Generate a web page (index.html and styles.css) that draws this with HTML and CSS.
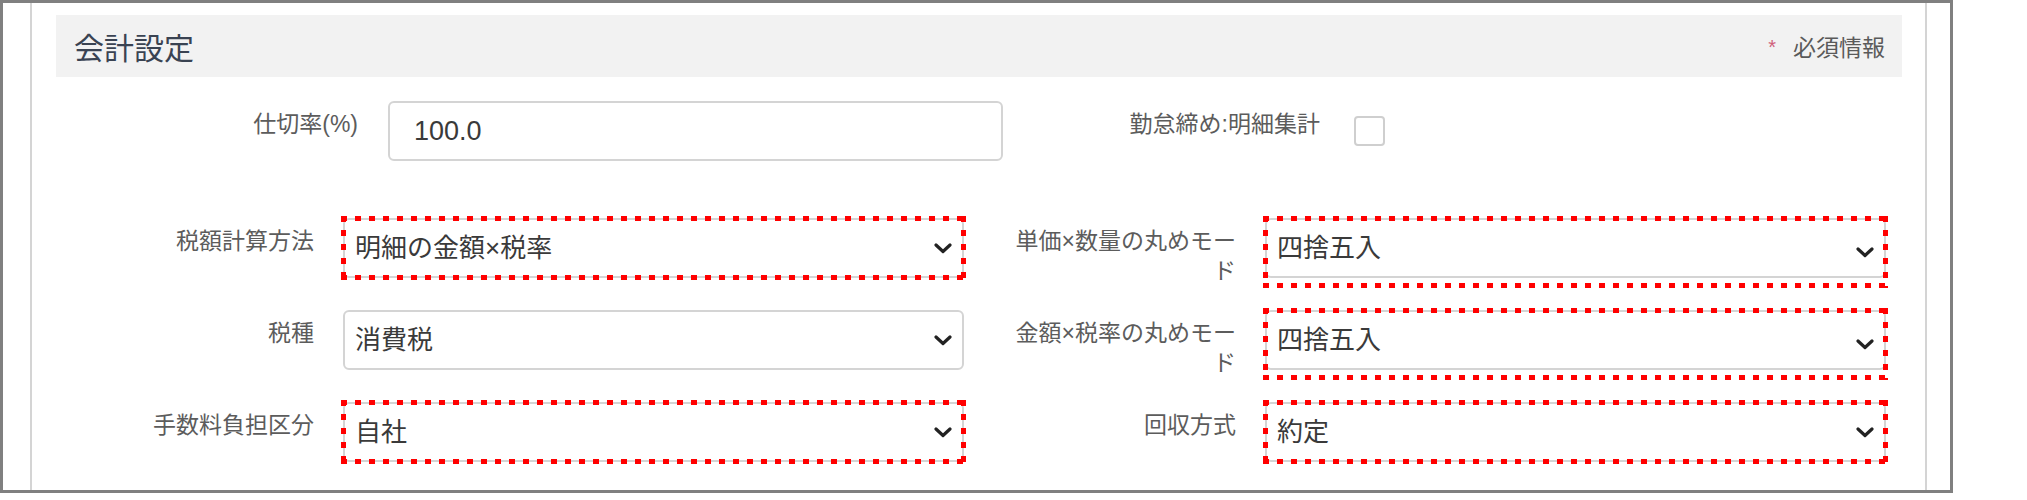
FILE: index.html
```html
<!DOCTYPE html>
<html lang="ja">
<head>
    <meta charset="UTF-8">
    <meta name="viewport" content="width=device-width, initial-scale=1.0">
    <title>会計設定</title>
    <link rel="stylesheet" href="styles.css">
</head>
<body>
    <div class="frame">
        <div class="panel">
            <div class="section-head">
                <h2 class="section-title">会計設定</h2>
                <span class="required-note"><span class="req-mark">*</span>必須情報</span>
            </div>

            <div class="row-first">
                <div class="field-first">
                    <label class="field-label label-rate" for="shikiriRitsu">仕切率(%)</label>
                    <input type="text" id="shikiriRitsu" class="text-input" value="100.0">
                </div>
                <div class="field-check">
                    <label class="field-label" for="kintaiShukei">勤怠締め:明細集計</label>
                    <input type="checkbox" id="kintaiShukei" class="check">
                </div>
            </div>

            <div class="form-grid">
                <div class="field">
                    <label class="field-label">税額計算方法</label>
                    <div class="select-wrap annot">
                        <select class="select"><option>明細の金額×税率</option></select>
                        <svg class="chevron" viewBox="0 0 18 11"><path d="M2 2 L9 8.5 L16 2"/></svg>
                    </div>
                </div>
                <div class="field">
                    <label class="field-label">単価×数量の丸めモード</label>
                    <div class="select-wrap annot">
                        <select class="select"><option>四捨五入</option></select>
                        <svg class="chevron" viewBox="0 0 18 11"><path d="M2 2 L9 8.5 L16 2"/></svg>
                    </div>
                </div>
                <div class="field">
                    <label class="field-label">税種</label>
                    <div class="select-wrap">
                        <select class="select"><option>消費税</option></select>
                        <svg class="chevron" viewBox="0 0 18 11"><path d="M2 2 L9 8.5 L16 2"/></svg>
                    </div>
                </div>
                <div class="field">
                    <label class="field-label">金額×税率の丸めモード</label>
                    <div class="select-wrap annot">
                        <select class="select"><option>四捨五入</option></select>
                        <svg class="chevron" viewBox="0 0 18 11"><path d="M2 2 L9 8.5 L16 2"/></svg>
                    </div>
                </div>
                <div class="field">
                    <label class="field-label">手数料負担区分</label>
                    <div class="select-wrap annot">
                        <select class="select"><option>自社</option></select>
                        <svg class="chevron" viewBox="0 0 18 11"><path d="M2 2 L9 8.5 L16 2"/></svg>
                    </div>
                </div>
                <div class="field">
                    <label class="field-label">回収方式</label>
                    <div class="select-wrap annot">
                        <select class="select"><option>約定</option></select>
                        <svg class="chevron" viewBox="0 0 18 11"><path d="M2 2 L9 8.5 L16 2"/></svg>
                    </div>
                </div>
            </div>
        </div>
    </div>
</body>
</html>
```

FILE: styles.css
```css
body {
    margin: 0;
    background-color: #fff;
    font-family: "Liberation Sans", "Noto Sans CJK JP", sans-serif;
    color: #333;
}

.frame {
    width: 1953px;
    height: 493px;
    box-sizing: border-box;
    border: 3px solid #808080;
    background-color: #fff;
}

.panel {
    height: 100%;
    margin: 0 23px 0 27px;
    padding: 12px 23px 0 24px;
    border-left: 2px solid #d4d4d4;
    border-right: 2px solid #d4d4d4;
    box-sizing: border-box;
}

.section-head {
    height: 62px;
    background-color: #f2f2f2;
    display: flex;
    align-items: center;
    justify-content: space-between;
    padding: 0 17px 0 18px;
}

.section-title {
    margin: 0;
    font-size: 30px;
    font-weight: normal;
    color: #3a4352;
}

.required-note {
    font-size: 23px;
    color: #5a5a5a;
    display: flex;
    align-items: center;
}

.req-mark {
    color: #d0607a;
    font-size: 20px;
    margin-right: 17px;
    margin-top: 2px;
}

.field-label {
    font-size: 23px;
    line-height: 30px;
    color: #5c5c5c;
    text-align: right;
    padding-top: 8px;
}

/* 1行目 */
.row-first {
    display: grid;
    grid-template-columns: 922px 922px;
    margin-top: 24px;
    height: 60px;
}

.field-first {
    display: grid;
    grid-template-columns: 302px 615px;
    column-gap: 30px;
}

.field-check {
    display: grid;
    grid-template-columns: 342px 32px;
    column-gap: 34px;
}

.text-input {
    height: 60px;
    box-sizing: border-box;
    border: 2px solid #d4d4d4;
    border-radius: 6px;
    padding: 0 24px;
    font-family: inherit;
    font-size: 27px;
    color: #3a3a3a;
    outline: none;
}

.check {
    appearance: none;
    margin: 15px 0 0;
    width: 31px;
    height: 30px;
    border: 2px solid #cfcfcf;
    border-radius: 4px;
    background-color: #fff;
}

/* 2〜4行目 */
.form-grid {
    display: grid;
    grid-template-columns: 922px 922px;
    row-gap: 32px;
    margin-top: 57px;
}

.field {
    display: grid;
    grid-template-columns: 258px 621px;
    column-gap: 29px;
    height: 60px;
}

.field .field-label {
    padding-left: 26px;
}

.select-wrap {
    position: relative;
}

.select {
    appearance: none;
    width: 100%;
    height: 60px;
    box-sizing: border-box;
    border: 2px solid #d4d4d4;
    border-radius: 6px;
    background-color: #fff;
    padding: 0 44px 0 10px;
    font-family: inherit;
    font-size: 26px;
    color: #3a3a3a;
    outline: none;
}

.chevron {
    position: absolute;
    right: 12px;
    top: 50%;
    width: 18px;
    height: 11px;
    margin-top: -5px;
    fill: none;
    stroke: #222;
    stroke-width: 3.2;
    stroke-linecap: round;
    stroke-linejoin: round;
}

/* 赤い点線の注記枠 */
.annot::after {
    content: "";
    position: absolute;
    top: -2px;
    left: -2px;
    right: -2px;
    bottom: -2px;
    pointer-events: none;
    background:
        repeating-linear-gradient(90deg, #f00 0 6px, transparent 6px 14px) left top / 100% 5px no-repeat,
        repeating-linear-gradient(90deg, #f00 0 6px, transparent 6px 14px) left bottom / 100% 5px no-repeat,
        repeating-linear-gradient(180deg, #f00 0 6px, transparent 6px 14px) left top / 5px 100% no-repeat,
        repeating-linear-gradient(180deg, #f00 0 6px, transparent 6px 14px) right top / 5px 100% no-repeat;
}
```
